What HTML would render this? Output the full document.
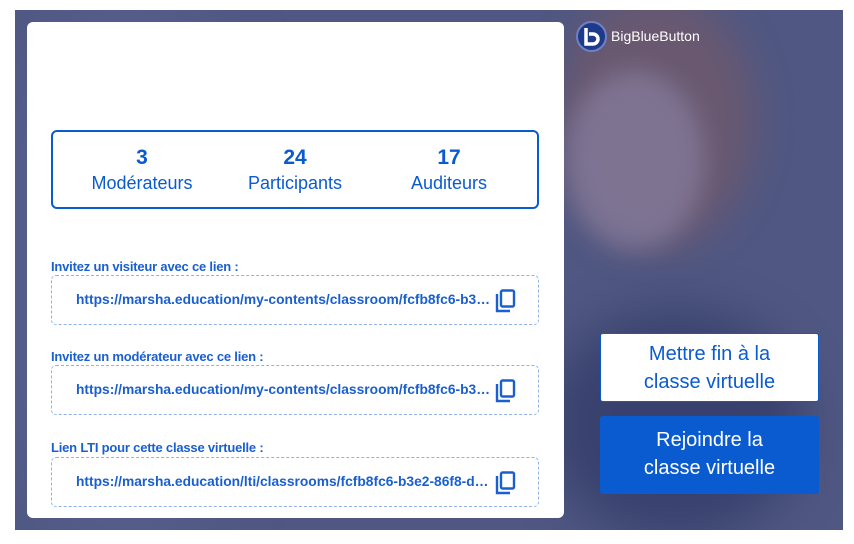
<!DOCTYPE html>
<html><head><meta charset="utf-8"><style>
*{margin:0;padding:0;box-sizing:border-box}
body{width:854px;height:544px;background:#fff;position:relative;overflow:hidden;font-family:"Liberation Sans",sans-serif}
.bg{position:absolute;left:15px;top:10px;width:828px;height:520px;background:#4f5782;overflow:hidden}
.blob{position:absolute;border-radius:50%}
.card{position:absolute;left:27px;top:22px;width:537px;height:496px;background:#fff;border-radius:6px}
.stats{position:absolute;left:24px;top:108px;width:488px;height:79px;border:2px solid #0a5bd0;border-radius:6px}
.col{position:absolute;top:13px;width:160px;text-align:center;color:#0a5bd0}
.col b{display:block;font-size:21px;line-height:26px}
.col span{display:block;font-size:18px;line-height:25px}
.lbl{position:absolute;left:24px;font-size:13px;font-weight:bold;color:#1a5fd0;letter-spacing:-0.2px}
.box{position:absolute;left:24px;width:488px;height:50px;border:1px dashed #8fb3e8;border-radius:5px}
.url{position:absolute;left:24px;top:16px;font-size:13.8px;font-weight:bold;color:#1a5fd0;white-space:nowrap}
.ic{position:absolute;left:443px;top:13px}
.btn{position:absolute;left:600px;width:219px;text-align:center;font-size:20px;line-height:28px;border-radius:3px}
</style></head><body>
<div class="bg">
 <div class="blob" style="left:540px;top:-20px;width:200px;height:260px;background:#8a5a5a;opacity:.45;filter:blur(20px)"></div>
 <div class="blob" style="left:550px;top:60px;width:140px;height:180px;background:#8c85a8;opacity:.6;filter:blur(12px)"></div>
 <div class="blob" style="left:530px;top:300px;width:260px;height:230px;background:#2a3260;opacity:.6;filter:blur(25px)"></div>
 <div class="blob" style="left:-40px;top:-40px;width:300px;height:600px;background:#5a6292;opacity:.5;filter:blur(30px)"></div>
</div>
<svg style="position:absolute;left:576px;top:21px" width="31" height="31" viewBox="0 0 31 31"><circle cx="15.5" cy="15.5" r="14.5" fill="#1e3a8a" stroke="#7080c0" stroke-width="2"/><path d="M10 7v16h7a5 5 0 0 0 0-10h-4" fill="none" stroke="#fff" stroke-width="3.5"/></svg>
<div style="position:absolute;left:611px;top:28px;color:#fff;font-size:14px">BigBlueButton</div>
<div class="card">
 <div class="stats">
  <div class="col" style="left:9px"><b>3</b><span>Modérateurs</span></div>
  <div class="col" style="left:162px"><b>24</b><span>Participants</span></div>
  <div class="col" style="left:316px"><b>17</b><span>Auditeurs</span></div>
 </div>
 <div class="lbl" style="top:237px">Invitez un visiteur avec ce lien :</div>
 <div class="box" style="top:253px"><div class="url">https://marsha.education/my-contents/classroom/fcfb8fc6-b3…</div>
  <svg class="ic" width="22" height="24" viewBox="0 0 22 24"><path d="M2 5v17h13" fill="none" stroke="#1a5fd0" stroke-width="2.4"/><rect x="6" y="1.5" width="13" height="16" rx="1.5" fill="none" stroke="#1a5fd0" stroke-width="2.4"/></svg></div>
 <div class="lbl" style="top:327px">Invitez un modérateur avec ce lien :</div>
 <div class="box" style="top:343px"><div class="url">https://marsha.education/my-contents/classroom/fcfb8fc6-b3…</div>
  <svg class="ic" width="22" height="24" viewBox="0 0 22 24"><path d="M2 5v17h13" fill="none" stroke="#1a5fd0" stroke-width="2.4"/><rect x="6" y="1.5" width="13" height="16" rx="1.5" fill="none" stroke="#1a5fd0" stroke-width="2.4"/></svg></div>
 <div class="lbl" style="top:418px">Lien LTI pour cette classe virtuelle :</div>
 <div class="box" style="top:435px"><div class="url">https://marsha.education/lti/classrooms/fcfb8fc6-b3e2-86f8-d…</div>
  <svg class="ic" width="22" height="24" viewBox="0 0 22 24"><path d="M2 5v17h13" fill="none" stroke="#1a5fd0" stroke-width="2.4"/><rect x="6" y="1.5" width="13" height="16" rx="1.5" fill="none" stroke="#1a5fd0" stroke-width="2.4"/></svg></div>
</div>
<div class="btn" style="top:333px;height:69px;background:#fff;border:1px solid #0a5bd0;color:#0a5bd0;padding-top:6px">Mettre fin à la<br>classe virtuelle</div>
<div class="btn" style="top:416px;height:78px;background:#0a5bd0;color:#fff;padding-top:10px">Rejoindre la<br>classe virtuelle</div>
</body></html>
